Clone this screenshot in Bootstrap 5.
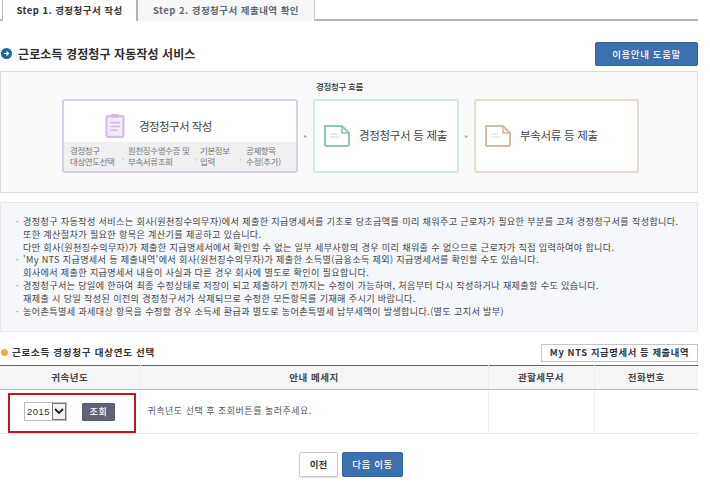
<!DOCTYPE html>
<html lang="ko">
<head>
<meta charset="utf-8">
<title>경정청구서 작성</title>
<link href="https://cdn.jsdelivr.net/npm/bootstrap@5.3.0/dist/css/bootstrap.min.css" rel="stylesheet">
<style>
html,body{background:#fff;overflow:hidden}
body{font-family:"Noto Sans CJK KR","Liberation Sans",sans-serif;color:#333;font-size:9px;line-height:1.2}
.pg{width:698px;height:483px}
.nav.tabbar{height:21px;border-bottom:2px solid #b1b5b8;padding-left:2px;flex-wrap:nowrap}
.tabbar .nav-link{height:21px;padding:0;margin:0;border:1px solid #c9cccf;border-width:0 1px;border-radius:0;font-size:9.5px;font-weight:700;color:#5d6770;background:#f7f7f7;display:flex;align-items:center;justify-content:center;letter-spacing:.45px}
.tabbar .nav-link.active{width:136px;color:#333;background:#fff;border-right:2px solid #b1b5b8;border-left-color:#b1b5b8;height:21px}
.tabbar .tab2{width:177px;border-left:0}
.headrow{height:24px;margin-top:21px;padding-left:1px}
.dotb{width:11px;height:11px;border-radius:50%;background:#17699f;flex:none;margin-right:6px}
.h1t{font-size:12px;font-weight:700;color:#2c2c2c;letter-spacing:.1px;margin:0}
.btn.helpb{width:103px;height:24px;padding:0;background:#3d70ae;border:1px solid #33639c;border-radius:2px;color:#fff;font-size:9.5px;font-weight:500;letter-spacing:.6px}
.flowbox{height:122px;margin-top:5px;background:#fafafa;border:1px solid #dcdcdc;position:relative}
.flowcap{font-size:8.5px;font-weight:500;text-align:center;color:#333;padding-top:9px;height:27px;padding-right:19px;letter-spacing:-.3px}
.flowrow{padding-left:61px;height:74px}
.stp{height:74px;background:#fff;border:2px solid;border-radius:3px}
.s1{width:236px;border-color:#dccdec;display:flex;flex-direction:column}
.s2{width:146px;border-color:#d2ece4}
.s3{width:165px;border-color:#e9dccf}
.arw{width:15px;text-align:center;color:#aaa;font-size:6px;flex:none}
.s1top{height:41px;padding-left:41px;gap:14px;padding-top:8px}
.s1t{font-size:11.5px;color:#444;font-weight:400;letter-spacing:-.55px;padding-top:2px}
.s1sub{flex:1;background:#f0f0f0;font-size:8.5px;color:#777;line-height:11px;padding:3px 0 0 6px;letter-spacing:-.4px}
.subc{flex:none}
.subg{color:#aaa;font-size:7px;text-align:center;flex:none;align-self:center}
.stpt{font-size:11.5px;color:#444;font-weight:400;letter-spacing:-.3px;white-space:nowrap}
.notebox{height:130px;margin-top:9px;background:#f5f7fb;border:1px solid #e6e8ec;padding:12px 0 0 15px;font-size:9.1px;line-height:12.8px;color:#444;letter-spacing:.36px;white-space:nowrap}
.noteln{padding-left:7px;position:relative}
.noteln.bl::before{content:"·";position:absolute;left:0;top:0;color:#777}
.h2row{height:18px;margin-top:12px}
.doto{width:7px;height:7px;border-radius:50%;background:#e8ae45;margin:0 4px 0 1px;flex:none}
.h2t{font-size:9.5px;font-weight:700;color:#333;letter-spacing:.75px;margin:0}
.btn.mynts{width:157px;height:18px;padding:0;background:#fff;border:1px solid #c5c5c5;border-radius:0;font-size:9.3px;font-weight:700;color:#333;letter-spacing:.62px}
.table.yrtab{width:698px;margin:3px 0 0;table-layout:fixed;border-top:1px solid #666;font-size:9.5px;--bs-table-bg:transparent}
.yrtab th{height:24px;padding:0;background:#f5f5f5;text-align:center;vertical-align:middle;font-weight:700;color:#444;border-bottom:1px solid #bbb;border-left:1px solid #eee;letter-spacing:.5px;font-size:9.5px}
.yrtab th:first-child,.yrtab td:first-child{border-left:0}
.yrtab td{height:43px;padding:0;vertical-align:middle;border-bottom:1px solid #e6e6e6;border-left:1px solid #eee;color:#555;letter-spacing:.5px;font-size:9px}
.msg{padding-left:7px!important}
.redbox{position:absolute;left:8px;top:3px;width:128px;height:40px;border:2px solid #c3151c;pointer-events:none}
.yrcell{position:relative;height:43px;padding-left:24px;gap:15px}
.yrsel{width:43px;height:19px;border:1px solid #bbb;background:#fff;display:flex;font-family:"Liberation Sans",sans-serif;font-size:9.5px;color:#333}
.yrval{flex:1;padding:3px 0 0 2px}
.yrar{width:14px;border:1px solid #777;display:flex;align-items:center;justify-content:center;background:#f2f2f2}
.btn.qbtn{width:33px;height:18px;padding:0;background:#5e6473;border:1px solid #565c6a;border-radius:1px;color:#fff;font-size:9px;font-weight:500;letter-spacing:.6px}
.btmrow{margin-top:18px;gap:4px;padding-left:4px}
.btn.prevb{width:39px;height:25px;padding:0;background:#fff;border:1px solid #ccc;border-radius:2px;color:#333;font-size:9.5px;font-weight:700;box-shadow:0 1px 1px #ddd}
.btn.nextb{width:61px;height:25px;padding:0;background:#3d70ae;border:1px solid #33639c;border-radius:2px;color:#fff;font-size:9.5px;font-weight:500;letter-spacing:.6px}
</style>
</head>
<body>
<div class="pg">
  <ul class="nav tabbar">
    <li class="nav-item"><a class="nav-link active" href="#">Step 1. 경정청구서 작성</a></li>
    <li class="nav-item"><a class="nav-link tab2" href="#">Step 2. 경정청구서 제출내역 확인</a></li>
  </ul>

  <div class="d-flex align-items-center justify-content-between headrow">
    <div class="d-flex align-items-center">
      <span class="dotb d-flex align-items-center justify-content-center"><svg width="7" height="7" viewBox="0 0 7 7"><path d="M1 3.5h4M3.5 1.5l2 2-2 2" fill="none" stroke="#fff" stroke-width="1.2"/></svg></span>
      <h1 class="h1t">근로소득 경정청구 자동작성 서비스</h1>
    </div>
    <button class="btn helpb" type="button">이용안내 도움말</button>
  </div>

  <div class="flowbox">
    <div class="flowcap">경정청구 흐름</div>
    <div class="d-flex flowrow">
      <div class="stp s1">
        <div class="d-flex align-items-center s1top">
          <svg width="20" height="25" viewBox="0 0 20 26"><rect x="1.2" y="3.2" width="17.6" height="21.6" rx="2" fill="#f3ebfa" stroke="#d3b9ec" stroke-width="2.2"/><rect x="6" y="1" width="8" height="4" rx="1" fill="#d3b9ec"/><path d="M5 10h10M5 14h10M5 18h8" stroke="#d3b9ec" stroke-width="1.6"/></svg>
          <span class="s1t">경정청구서 작성</span>
        </div>
        <div class="d-flex s1sub">
          <div class="subc" style="width:47px">경정청구<br>대상연도선택</div>
          <div class="subg" style="width:11px">›</div>
          <div class="subc" style="width:64px">원천징수영수증 및<br>부속서류조회</div>
          <div class="subg" style="width:8px">›</div>
          <div class="subc" style="width:34px">기본정보<br>입력</div>
          <div class="subg" style="width:12px">›</div>
          <div class="subc">공제항목<br>수정(추가)</div>
        </div>
      </div>
      <div class="arw align-self-center">▸</div>
      <div class="stp s2 d-flex align-items-center gap-2 ps-2">
        <svg width="28" height="24" viewBox="0 0 28 24" class="flex-none"><path d="M2 2h17l7 7v11a2 2 0 0 1-2 2H3a1.5 1.5 0 0 1-1-1.5z" fill="#fff" stroke="#8fc9b6" stroke-width="2"/><path d="M19 2v7h7" fill="none" stroke="#8fc9b6" stroke-width="1.6"/><path d="M7 10h7M7 13h9" stroke="#c3e2d7" stroke-width="1.2"/></svg>
        <span class="stpt">경정청구서 등 제출</span>
      </div>
      <div class="arw align-self-center">▸</div>
      <div class="stp s3 d-flex align-items-center gap-2 ps-2">
        <svg width="28" height="24" viewBox="0 0 28 24" class="flex-none"><path d="M2 2h17l7 7v11a2 2 0 0 1-2 2H3a1.5 1.5 0 0 1-1-1.5z" fill="#fff" stroke="#d2bca8" stroke-width="2"/><path d="M19 2v7h7" fill="none" stroke="#d2bca8" stroke-width="1.6"/><path d="M7 10h7M7 13h9" stroke="#e6d9cd" stroke-width="1.2"/></svg>
        <span class="stpt">부속서류 등 제출</span>
      </div>
    </div>
  </div>

  <div class="notebox">
    <div class="noteln bl">경정청구 자동작성 서비스는 회사(원천징수의무자)에서 제출한 지급명세서를 기초로 당초금액를 미리 채워주고 근로자가 필요한 부분를 고쳐 경정청구서를 작성합니다.</div>
    <div class="noteln">또한 계산절차가 필요한 항목은 계산기를 제공하고 있습니다.</div>
    <div class="noteln">다만 회사(원천징수의무자)가 제출한 지급명세서에서 확인할 수 없는 일부 세부사항의 경우 미리 채워줄 수 없으므로 근로자가 직접 입력하여야 합니다.</div>
    <div class="noteln bl">'My NTS 지급명세서 등 제출내역'에서 회사(원천징수의무자)가 제출한 소득별(금융소득 제외) 지급명세서를 확인할 수도 있습니다.</div>
    <div class="noteln">회사에서 제출한 지급명세서 내용이 사실과 다른 경우 회사에 별도로 확인이 필요합니다.</div>
    <div class="noteln bl">경정청구서는 당일에 한하여 최종 수정상태로 저장이 되고 제출하기 전까지는 수정이 가능하며, 처음부터 다시 작성하거나 재제출할 수도 있습니다.</div>
    <div class="noteln">재제출 시 당일 작성된 이전의 경정청구서가 삭제되므로 수정한 모든항목를 기재해 주시기 바랍니다.</div>
    <div class="noteln bl">농어촌특별세 과세대상 항목을 수정할 경우 소득세 환급과 별도로 농어촌특별세 납부세액이 발생합니다.(별도 고지서 발부)</div>
  </div>

  <div class="d-flex align-items-center justify-content-between h2row">
    <div class="d-flex align-items-center">
      <span class="doto"></span>
      <h2 class="h2t">근로소득 경정청구 대상연도 선택</h2>
    </div>
    <button class="btn mynts" type="button">My NTS 지급명세서 등 제출내역</button>
  </div>

  <table class="table yrtab">
    <colgroup><col style="width:140px"><col style="width:348px"><col style="width:106px"><col style="width:104px"></colgroup>
    <thead><tr><th>귀속년도</th><th>안내 메세지</th><th>관할세무서</th><th>전화번호</th></tr></thead>
    <tbody><tr>
      <td>
        <div class="d-flex align-items-center yrcell">
          <div class="yrsel"><span class="yrval">2015</span><span class="yrar"><svg width="10" height="7" viewBox="0 0 10 7"><path d="M1 1l4 4 4-4" fill="none" stroke="#222" stroke-width="1.8"/></svg></span></div>
          <button class="btn qbtn" type="button">조회</button>
          <div class="redbox"></div>
        </div>
      </td>
      <td class="msg">귀속년도 선택 후 조회버튼를 눌러주세요.</td>
      <td></td><td></td>
    </tr></tbody>
  </table>

  <div class="d-flex justify-content-center btmrow">
    <button class="btn prevb" type="button">이전</button>
    <button class="btn nextb" type="button">다음 이동</button>
  </div>
</div>
<script src="https://cdn.jsdelivr.net/npm/bootstrap@5.3.0/dist/js/bootstrap.bundle.min.js"></script>
</body>
</html>
